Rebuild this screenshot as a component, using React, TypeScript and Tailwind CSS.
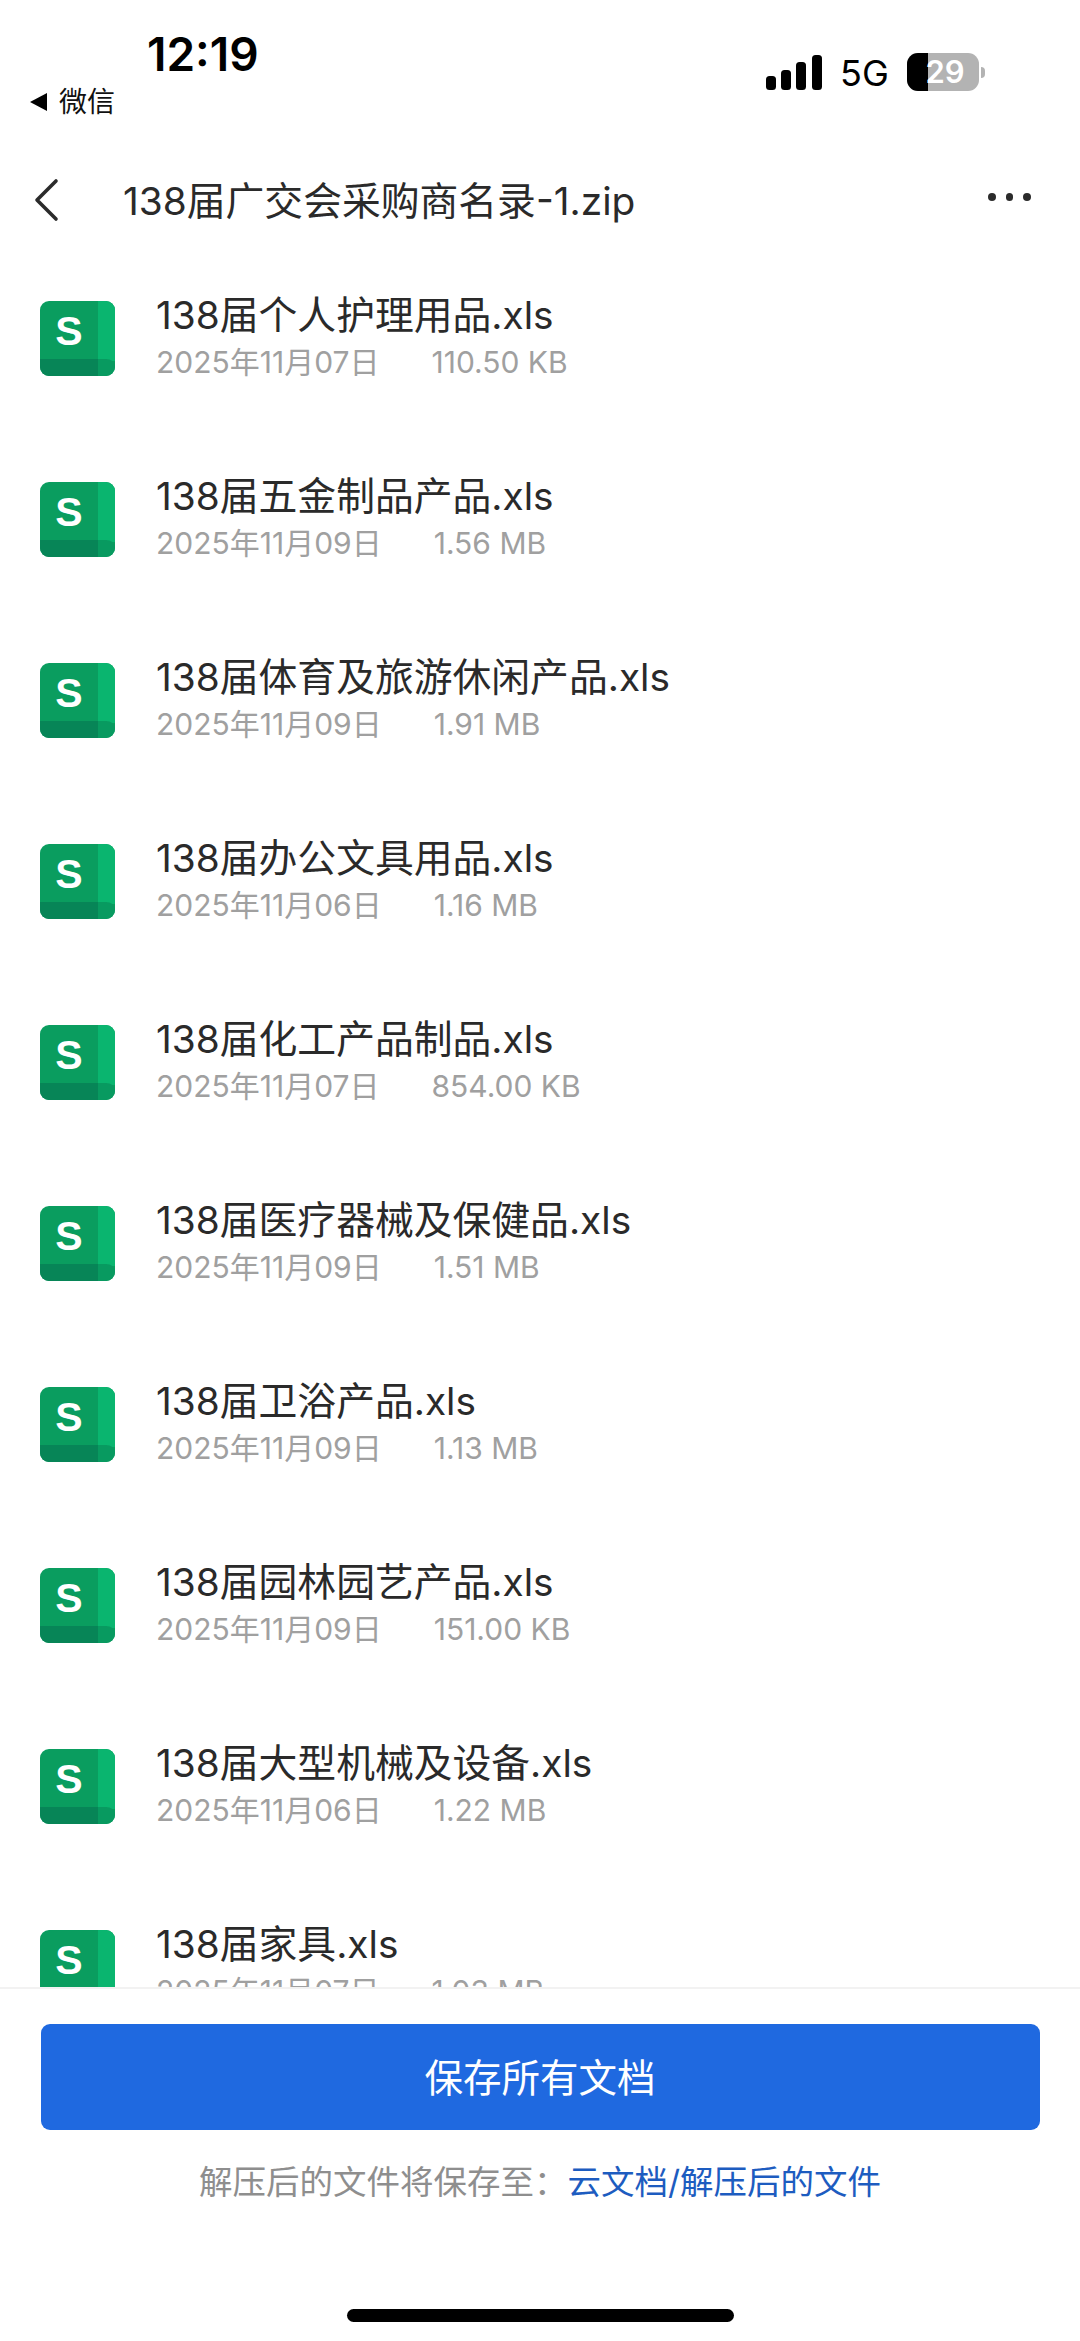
const FONT = "font-['Inter','Noto_Sans_CJK_SC',sans-serif]";

const files = [
  ["138届个人护理用品.xls", "2025年11月07日", "110.50 KB"],
  ["138届五金制品产品.xls", "2025年11月09日", "1.56 MB"],
  ["138届体育及旅游休闲产品.xls", "2025年11月09日", "1.91 MB"],
  ["138届办公文具用品.xls", "2025年11月06日", "1.16 MB"],
  ["138届化工产品制品.xls", "2025年11月07日", "854.00 KB"],
  ["138届医疗器械及保健品.xls", "2025年11月09日", "1.51 MB"],
  ["138届卫浴产品.xls", "2025年11月09日", "1.13 MB"],
  ["138届园林园艺产品.xls", "2025年11月09日", "151.00 KB"],
  ["138届大型机械及设备.xls", "2025年11月06日", "1.22 MB"],
  ["138届家具.xls", "2025年11月07日", "1.03 MB"],
];

function SheetIcon() {
  return (
    <svg width="75" height="75" viewBox="0 0 75 75" className="shrink-0">
      <path d="M9 0H66a9 9 0 0 1 9 9V66a9 9 0 0 1-9 9H9a9 9 0 0 1-9-9V9a9 9 0 0 1 9-9Z" fill="#0a9d5f" />
      <path d="M58 0H66a9 9 0 0 1 9 9V60H58Z" fill="#0ab56f" />
      <path d="M0 58H58V75H9a9 9 0 0 1-9-9Z" fill="#078557" />
      <path d="M58 58H66c5 0 9 3 9 8a9 9 0 0 1-9 9H58Z" fill="#089a60" />
      <text x="29" y="43.5" textAnchor="middle" fontFamily="Liberation Sans" fontWeight="700" fontSize="41" fill="#ffffff">S</text>
    </svg>
  );
}

function Row({ f }: { f: string[] }) {
  return (
    <div className="flex h-[181px] shrink-0 pl-[40px]">
      <div className="pt-[33px]"><SheetIcon /></div>
      <div className="ml-[41px]">
        <div className="pt-[22px] text-[38.8px] leading-[50px] text-[#2a2a2a]">{f[0]}</div>
        <div className="mt-[2px] flex gap-[52px] text-[30px] leading-[40px] text-[#a0a0a0]">
          <span>{f[1]}</span>
          <span>{f[2]}</span>
        </div>
      </div>
    </div>
  );
}

export default function App() {
  return (
    <div className={`${FONT} flex h-[2341px] w-[1080px] flex-col overflow-hidden bg-white`}>
      <div className="relative h-[133px] shrink-0">
        <div className="absolute left-[147px] top-[27px] text-[46px] font-semibold leading-[54px] text-black">12:19</div>
        <div className="absolute left-[30px] top-[85px] flex items-center text-[28px] leading-[34px] text-[#111]">
          <span className="mr-[12px] h-0 w-0 border-y-[9px] border-r-[17px] border-y-transparent border-r-black" />
          微信
        </div>
        <svg className="absolute left-[766px] top-[54px]" width="60" height="38" viewBox="0 0 60 38">
          <rect x="0" y="22" width="10" height="14" rx="3.5" fill="#000" />
          <rect x="15" y="16" width="10" height="20" rx="3.5" fill="#000" />
          <rect x="30" y="8" width="10" height="28" rx="3.5" fill="#000" />
          <rect x="46" y="1" width="10" height="35" rx="3.5" fill="#000" />
        </svg>
        <div className="absolute left-[840px] top-[53px] text-[36px] leading-[40px] text-black">5G</div>
        <div className="absolute left-[907px] top-[53px] flex h-[38px] w-[72px] overflow-hidden rounded-[11px] bg-[#b3b3b3]">
          <div className="h-full w-[21px] bg-black" />
        </div>
        <div className="absolute left-[907px] top-[53px] flex h-[38px] w-[72px] items-center justify-center pl-[4px] text-[31px] font-semibold leading-[38px] text-white">29</div>
        <div className="absolute left-[981px] top-[67px] h-[11px] w-[4px] rounded-r-full bg-[#b3b3b3]" />
      </div>

      <div className="relative flex h-[135px] shrink-0 items-start">
        <svg className="absolute left-[31px] top-[45px]" width="30" height="44" viewBox="0 0 30 44" fill="none">
          <path d="M25 3 L6 22 L25 41" stroke="#2b2b2b" strokeWidth="3.6" strokeLinecap="round" strokeLinejoin="round" />
        </svg>
        <div className="ml-[123px] mt-[43px] text-[38.8px] leading-[50px] text-[#2a2a2a]">138届广交会采购商名录-1.zip</div>
        <div className="absolute left-[988px] top-[60px] flex gap-[10px]">
          <span className="h-[7.5px] w-[7.5px] rounded-full bg-[#2b2b2b]" />
          <span className="h-[7.5px] w-[7.5px] rounded-full bg-[#2b2b2b]" />
          <span className="h-[7.5px] w-[7.5px] rounded-full bg-[#2b2b2b]" />
        </div>
      </div>

      <div className="relative flex min-h-0 flex-1 flex-col overflow-hidden">
        {files.map((f) => <Row key={f[0]} f={f} />)}
      </div>

      <div className="flex h-[354px] shrink-0 flex-col items-center border-t-2 border-[#f2f2f2] bg-white">
        <button className="mt-[35px] flex h-[106px] w-[999px] items-center justify-center rounded-[9px] bg-[#1f69e0] pt-[2px] text-[38.5px] leading-[50px] text-white">保存所有文档</button>
        <div className="mt-[29px] flex text-[33.5px] leading-[46px]">
          <span className="text-[#8e8e8e]">解压后的文件将保存至：</span>
          <span className="text-[#1d5cc0]">云文档/解压后的文件</span>
        </div>
        <div className="mt-[104px] h-[13px] w-[387px] rounded-full bg-black" />
      </div>
    </div>
  );
}
